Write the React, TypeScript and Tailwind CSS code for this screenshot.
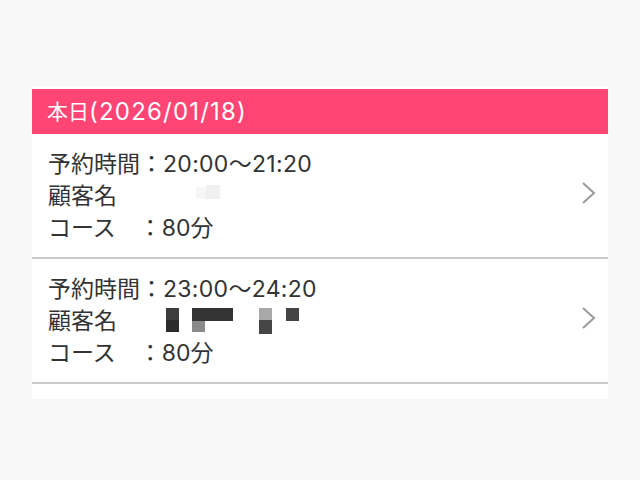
const font = { fontFamily: 'Inter, "Noto Sans CJK JP", "Noto Sans", sans-serif' }

type Reservation = {
  time: string
  blur: "light" | "dark"
}

const reservations: Reservation[] = [
  { time: "20:00〜21:20", blur: "light" },
  { time: "23:00〜24:20", blur: "dark" },
]

function Chevron() {
  return (
    <svg width="16" height="24" viewBox="0 0 16 24" className="shrink-0 mb-[6px]">
      <path d="M2 2 L13 12 L2 22" fill="none" stroke="#9a9a9a" strokeWidth="2" />
    </svg>
  )
}

// モザイク処理された顧客名
function NameMosaic({ kind }: { kind: "light" | "dark" }) {
  if (kind === "light") {
    return (
      <svg width="140" height="26" viewBox="0 0 140 26">
        <rect x="30" y="4" width="10" height="12" fill="#f6f6f6" />
        <rect x="40" y="2" width="14" height="14" fill="#f0f0f0" />
      </svg>
    )
  }
  return (
    <svg width="140" height="26" viewBox="0 0 140 26">
      <rect x="0" y="0" width="13" height="12" fill="#3c3c3c" />
      <rect x="0" y="12" width="13" height="12" fill="#2b2b2b" />
      <rect x="26" y="0" width="41" height="13" fill="#333" />
      <rect x="26" y="13" width="13" height="11" fill="#8a8a8a" />
      <rect x="93" y="0" width="13" height="12" fill="#a8a8a8" />
      <rect x="93" y="12" width="13" height="14" fill="#454545" />
      <rect x="120" y="0" width="13" height="13" fill="#444" />
    </svg>
  )
}

export default function App() {
  return (
    <div className="min-h-screen bg-[#f8f8f8] px-8 pt-[86px]" style={font}>
      <div className="bg-white pt-[3px] pb-[15px]">
        <div className="h-[45px] bg-[#ff4574] px-[15px] flex items-center text-white text-[21px]">
          本日<span className="text-[24px] tracking-[1.2px]">(2026/01/18)</span>
        </div>
        {reservations.map((r, i) => (
          <div
            key={i}
            className="flex items-center justify-between pl-[16px] pr-[11px] pt-[14px] pb-[13px] border-b-2 border-[#c9c9c9] text-[#333] text-[23px] leading-[32px]"
          >
            <div>
              <div>
                予約時間：<span className="tracking-[0.3px]">{r.time}</span>
              </div>
              <div className="flex items-center">
                <span className="w-[118px]">顧客名</span>
                <NameMosaic kind={r.blur} />
              </div>
              <div>コース　：80分</div>
            </div>
            <Chevron />
          </div>
        ))}
      </div>
    </div>
  )
}
